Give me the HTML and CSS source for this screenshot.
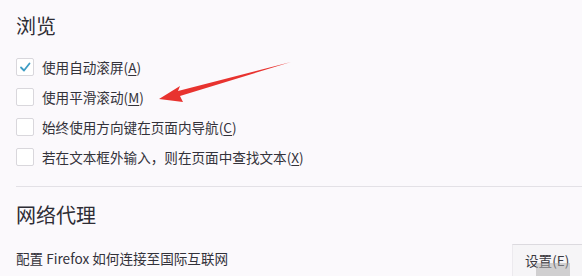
FILE: index.html
```html
<!DOCTYPE html>
<html lang="zh-CN">
<head>
<meta charset="utf-8">
<link rel="stylesheet" href="styles.css">
</head>
<body>
<main class="page">
  <h2 class="heading first">浏览</h2>
  <ul class="options">
    <li class="option"><span class="box checked"><svg viewBox="0 0 18 18" width="18" height="18"><path d="M5 9.5 L8 12.5 L13.5 5.5" fill="none" stroke="#3d9cc4" stroke-width="1.8" stroke-linecap="round" stroke-linejoin="round"/></svg></span><span class="label">使用自动滚屏(<u>A</u>)</span></li>
    <li class="option"><span class="box"></span><span class="label">使用平滑滚动(<u>M</u>)</span></li>
    <li class="option"><span class="box"></span><span class="label">始终使用方向键在页面内导航(<u>C</u>)</span></li>
    <li class="option"><span class="box"></span><span class="label">若在文本框外输入，则在页面中查找文本(<u>X</u>)</span></li>
  </ul>
  <hr class="divider">
  <h2 class="heading second">网络代理</h2>
  <div class="proxy-row">
    <span class="proxy-text">配置 Firefox 如何连接至国际互联网</span>
    <span class="button">设置(E)</span>
  </div>
</main>
<svg class="arrow" viewBox="0 0 582 276" width="582" height="276">
  <path d="M291 62 L178 91 L180 86 L159 99 L183 102 L180 96 Z" fill="#e8332f"/>
</svg>
<div class="watermark"></div>
</body>
</html>
```
FILE: styles.css
```css
html, body {
  margin: 0;
  padding: 0;
  background: #fbf9fc;
  overflow: hidden;
  width: 582px;
  height: 276px;
}
body {
  position: relative;
  font-family: "Noto Sans", "Noto Sans CJK SC", sans-serif;
  color: #2b2a33;
}
.page {
  width: 620px;
  padding: 0 0 0 16px;
  box-sizing: border-box;
}
.heading {
  margin: 0;
  font-weight: normal;
  font-family: "Noto Sans CJK SC", sans-serif;
  color: #2e2d35;
}
.heading.first {
  font-size: 20px;
  line-height: 28px;
  padding-top: 12px;
}
.heading.second {
  font-size: 20px;
  line-height: 30px;
  margin-top: 13px;
}
.options {
  list-style: none;
  margin: 12px 0 0;
  padding: 0;
}
.option {
  display: flex;
  align-items: center;
  height: 30px;
  font-size: 13.6px;
  font-family: "Noto Sans CJK SC", sans-serif;
  color: #33323a;
}
.box {
  width: 16px;
  height: 16px;
  border: 1px solid #d9d7dc;
  border-radius: 2px;
  background: #ffffff;
  margin-right: 8px;
  position: relative;
  flex: none;
}
.box svg {
  position: absolute;
  left: -1px;
  top: -1px;
}
.label u {
  text-decoration-thickness: 1px;
  text-underline-offset: 2px;
}
.divider {
  border: none;
  border-top: 1px solid #e3e1e6;
  margin: 14px 0 0;
  height: 0;
}
.proxy-row {
  display: flex;
  align-items: flex-start;
  margin-top: 14px;
  height: 34px;
}
.proxy-text {
  font-size: 13.6px;
  line-height: 20px;
  margin-top: 4px;
  font-family: "Noto Sans CJK SC", sans-serif;
  color: #33323a;
}
.button {
  margin-left: auto;
  width: 108px;
  height: 34px;
  box-sizing: border-box;
  border-top: 1px solid #dcdadf;
  border-left: 1px solid #eceaee;
  background: #f6f5f7;
  font-size: 13.6px;
  line-height: 30px;
  padding-left: 12px;
  font-family: "Noto Sans CJK SC", sans-serif;
  color: #3a3940;
}
.arrow {
  position: absolute;
  left: 0;
  top: 0;
  pointer-events: none;
}
.watermark {
  position: absolute;
  left: 536px;
  top: 263px;
  width: 34px;
  height: 13px;
  background: rgba(170, 170, 170, 0.5);
}
```
